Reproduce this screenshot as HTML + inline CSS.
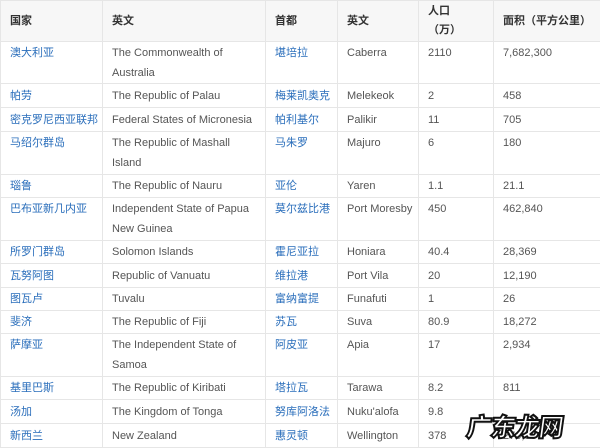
<!DOCTYPE html>
<html><head><meta charset="utf-8"><style>
body{margin:0;width:600px;height:447px;overflow:hidden;background:#fff;font-family:"Liberation Sans","Noto Sans CJK SC",sans-serif;font-size:11px;color:#555;position:relative}
table{border-collapse:collapse;width:600px;table-layout:fixed}
td,th{border:1px solid #e6e6e6;padding:0 0 0 9px;text-align:left;vertical-align:top;line-height:20px;box-sizing:border-box;white-space:nowrap;overflow:hidden}
th{background:#f7f7f7;font-weight:bold;color:#333;vertical-align:middle;line-height:19px}
td{padding-top:1px}
tr.s td{vertical-align:middle;padding-top:0}
a{color:#2a6ebb;text-decoration:none}
.wm{position:absolute;left:467px;top:408px;font-family:"Noto Sans CJK SC",sans-serif;font-weight:900;font-size:25px;color:#fff;-webkit-text-stroke:2px #111;letter-spacing:-1px;transform:skewX(-8deg)}
</style></head><body>
<table>
<colgroup><col style="width:102px"><col style="width:163px"><col style="width:72px"><col style="width:81px"><col style="width:75px"><col style="width:107px"></colgroup>
<tr style="height:41px"><th>国家</th><th>英文</th><th>首都</th><th>英文</th><th>人口<br>（万）</th><th>面积（平方公里）</th></tr>
<tr style="height:42px"><td><a>澳大利亚</a></td><td>The Commonwealth of<br>Australia</td><td><a>堪培拉</a></td><td>Caberra</td><td>2110</td><td>7,682,300</td></tr>
<tr class="s" style="height:24px"><td><a>帕劳</a></td><td>The Republic of Palau</td><td><a>梅莱凯奥克</a></td><td>Melekeok</td><td>2</td><td>458</td></tr>
<tr class="s" style="height:24px"><td><a>密克罗尼西亚联邦</a></td><td>Federal States of Micronesia</td><td><a>帕利基尔</a></td><td>Palikir</td><td>11</td><td>705</td></tr>
<tr style="height:43px"><td><a>马绍尔群岛</a></td><td>The Republic of Mashall<br>Island</td><td><a>马朱罗</a></td><td>Majuro</td><td>6</td><td>180</td></tr>
<tr class="s" style="height:23px"><td><a>瑙鲁</a></td><td>The Republic of Nauru</td><td><a>亚伦</a></td><td>Yaren</td><td>1.1</td><td>21.1</td></tr>
<tr style="height:43px"><td><a>巴布亚新几内亚</a></td><td>Independent State of Papua<br>New Guinea</td><td><a>莫尔兹比港</a></td><td>Port Moresby</td><td>450</td><td>462,840</td></tr>
<tr class="s" style="height:23px"><td><a>所罗门群岛</a></td><td>Solomon Islands</td><td><a>霍尼亚拉</a></td><td>Honiara</td><td>40.4</td><td>28,369</td></tr>
<tr class="s" style="height:24px"><td><a>瓦努阿图</a></td><td>Republic of Vanuatu</td><td><a>维拉港</a></td><td>Port Vila</td><td>20</td><td>12,190</td></tr>
<tr class="s" style="height:23px"><td><a>图瓦卢</a></td><td>Tuvalu</td><td><a>富纳富提</a></td><td>Funafuti</td><td>1</td><td>26</td></tr>
<tr class="s" style="height:23px"><td><a>斐济</a></td><td>The Republic of Fiji</td><td><a>苏瓦</a></td><td>Suva</td><td>80.9</td><td>18,272</td></tr>
<tr style="height:43px"><td><a>萨摩亚</a></td><td>The Independent State of<br>Samoa</td><td><a>阿皮亚</a></td><td>Apia</td><td>17</td><td>2,934</td></tr>
<tr class="s" style="height:23px"><td><a>基里巴斯</a></td><td>The Republic of Kiribati</td><td><a>塔拉瓦</a></td><td>Tarawa</td><td>8.2</td><td>811</td></tr>
<tr class="s" style="height:24px"><td><a>汤加</a></td><td>The Kingdom of Tonga</td><td><a>努库阿洛法</a></td><td>Nuku'alofa</td><td>9.8</td><td></td></tr>
<tr class="s" style="height:24px"><td><a>新西兰</a></td><td>New Zealand</td><td><a>惠灵顿</a></td><td>Wellington</td><td>378</td><td>270,534</td></tr>
</table>
<div class="wm">广东龙网</div>
</body></html>
